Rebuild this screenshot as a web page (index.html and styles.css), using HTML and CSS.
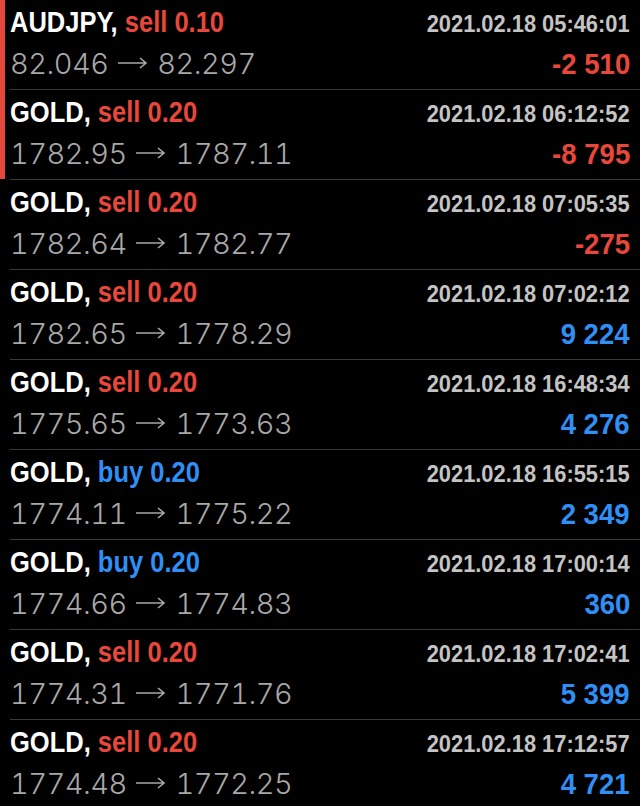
FILE: index.html
```html
<!DOCTYPE html>
<html lang="en">
<head>
    <meta charset="UTF-8">
    <meta name="viewport" content="width=device-width, initial-scale=1.0">
    <title>History</title>
    <link rel="stylesheet" href="styles.css">
</head>
<body>
    <div class="deal-list">
        <div class="deal open">
            <div class="deal-body">
                <div class="top">
                    <span class="symbol">AUDJPY, <span class="sell">sell 0.10</span></span>
                    <span class="time">2021.02.18 05:46:01</span>
                </div>
                <div class="bottom">
                    <span class="prices">82.046 <svg class="arrow" viewBox="0 0 30 12"><path d="M0 6H28M22 1L28 6L22 11"/></svg> 82.297</span>
                    <span class="profit loss">-2 510</span>
                </div>
            </div>
        </div>
        <div class="deal open">
            <div class="deal-body">
                <div class="top">
                    <span class="symbol">GOLD, <span class="sell">sell 0.20</span></span>
                    <span class="time">2021.02.18 06:12:52</span>
                </div>
                <div class="bottom">
                    <span class="prices">1782.95 <svg class="arrow" viewBox="0 0 30 12"><path d="M0 6H28M22 1L28 6L22 11"/></svg> 1787.11</span>
                    <span class="profit loss">-8 795</span>
                </div>
            </div>
        </div>
        <div class="deal">
            <div class="deal-body">
                <div class="top">
                    <span class="symbol">GOLD, <span class="sell">sell 0.20</span></span>
                    <span class="time">2021.02.18 07:05:35</span>
                </div>
                <div class="bottom">
                    <span class="prices">1782.64 <svg class="arrow" viewBox="0 0 30 12"><path d="M0 6H28M22 1L28 6L22 11"/></svg> 1782.77</span>
                    <span class="profit loss">-275</span>
                </div>
            </div>
        </div>
        <div class="deal">
            <div class="deal-body">
                <div class="top">
                    <span class="symbol">GOLD, <span class="sell">sell 0.20</span></span>
                    <span class="time">2021.02.18 07:02:12</span>
                </div>
                <div class="bottom">
                    <span class="prices">1782.65 <svg class="arrow" viewBox="0 0 30 12"><path d="M0 6H28M22 1L28 6L22 11"/></svg> 1778.29</span>
                    <span class="profit gain">9 224</span>
                </div>
            </div>
        </div>
        <div class="deal">
            <div class="deal-body">
                <div class="top">
                    <span class="symbol">GOLD, <span class="sell">sell 0.20</span></span>
                    <span class="time">2021.02.18 16:48:34</span>
                </div>
                <div class="bottom">
                    <span class="prices">1775.65 <svg class="arrow" viewBox="0 0 30 12"><path d="M0 6H28M22 1L28 6L22 11"/></svg> 1773.63</span>
                    <span class="profit gain">4 276</span>
                </div>
            </div>
        </div>
        <div class="deal">
            <div class="deal-body">
                <div class="top">
                    <span class="symbol">GOLD, <span class="buy">buy 0.20</span></span>
                    <span class="time">2021.02.18 16:55:15</span>
                </div>
                <div class="bottom">
                    <span class="prices">1774.11 <svg class="arrow" viewBox="0 0 30 12"><path d="M0 6H28M22 1L28 6L22 11"/></svg> 1775.22</span>
                    <span class="profit gain">2 349</span>
                </div>
            </div>
        </div>
        <div class="deal">
            <div class="deal-body">
                <div class="top">
                    <span class="symbol">GOLD, <span class="buy">buy 0.20</span></span>
                    <span class="time">2021.02.18 17:00:14</span>
                </div>
                <div class="bottom">
                    <span class="prices">1774.66 <svg class="arrow" viewBox="0 0 30 12"><path d="M0 6H28M22 1L28 6L22 11"/></svg> 1774.83</span>
                    <span class="profit gain">360</span>
                </div>
            </div>
        </div>
        <div class="deal">
            <div class="deal-body">
                <div class="top">
                    <span class="symbol">GOLD, <span class="sell">sell 0.20</span></span>
                    <span class="time">2021.02.18 17:02:41</span>
                </div>
                <div class="bottom">
                    <span class="prices">1774.31 <svg class="arrow" viewBox="0 0 30 12"><path d="M0 6H28M22 1L28 6L22 11"/></svg> 1771.76</span>
                    <span class="profit gain">5 399</span>
                </div>
            </div>
        </div>
        <div class="deal">
            <div class="deal-body">
                <div class="top">
                    <span class="symbol">GOLD, <span class="sell">sell 0.20</span></span>
                    <span class="time">2021.02.18 17:12:57</span>
                </div>
                <div class="bottom">
                    <span class="prices">1774.48 <svg class="arrow" viewBox="0 0 30 12"><path d="M0 6H28M22 1L28 6L22 11"/></svg> 1772.25</span>
                    <span class="profit gain">4 721</span>
                </div>
            </div>
        </div>
    </div>
</body>
</html>
```

FILE: styles.css
```css
body {
    margin: 0;
    background: #000;
    font-family: "Liberation Sans", Arial, sans-serif;
    overflow: hidden;
}
.deal-list {
    margin-top: -1px;
}
.deal {
    padding-left: 10px;
}
.deal.open {
    border-left: 5px solid #e5473a;
    padding-left: 5px;
}
.deal-body {
    border-top: 1px solid #3a3a3c;
    height: 89px;
    padding-right: 10px;
}
.top, .bottom {
    display: flex;
    justify-content: space-between;
    align-items: baseline;
    white-space: nowrap;
}
.top {
    padding-top: 7px;
    height: 30px;
}
.bottom {
    margin-top: 12px;
}
.symbol {
    display: inline-block;
    color: #fff;
    font-weight: bold;
    font-size: 30px;
    line-height: 30px;
    transform: scaleX(0.85);
    transform-origin: left;
}
.sell, .loss {
    color: #e8483b;
}
.buy, .gain {
    color: #2f8ff5;
}
.time {
    display: inline-block;
    color: #c4c4c4;
    font-weight: bold;
    font-size: 23px;
    line-height: 23px;
    transform: scaleX(0.95);
    transform-origin: right;
}
.prices {
    color: #a8a8a8;
    font-family: Inter, "Liberation Sans", sans-serif;
    font-weight: 300;
    font-size: 29px;
    line-height: 30px;
    letter-spacing: -0.5px;
    font-variant-numeric: tabular-nums;
}
.arrow {
    width: 30px;
    height: 12px;
    margin: 0 2px;
    vertical-align: 5px;
    fill: none;
    stroke: #a8a8a8;
    stroke-width: 1.6;
}
.profit {
    display: inline-block;
    font-weight: bold;
    font-size: 29px;
    line-height: 29px;
    transform: scaleX(0.95);
    transform-origin: right;
}
```
